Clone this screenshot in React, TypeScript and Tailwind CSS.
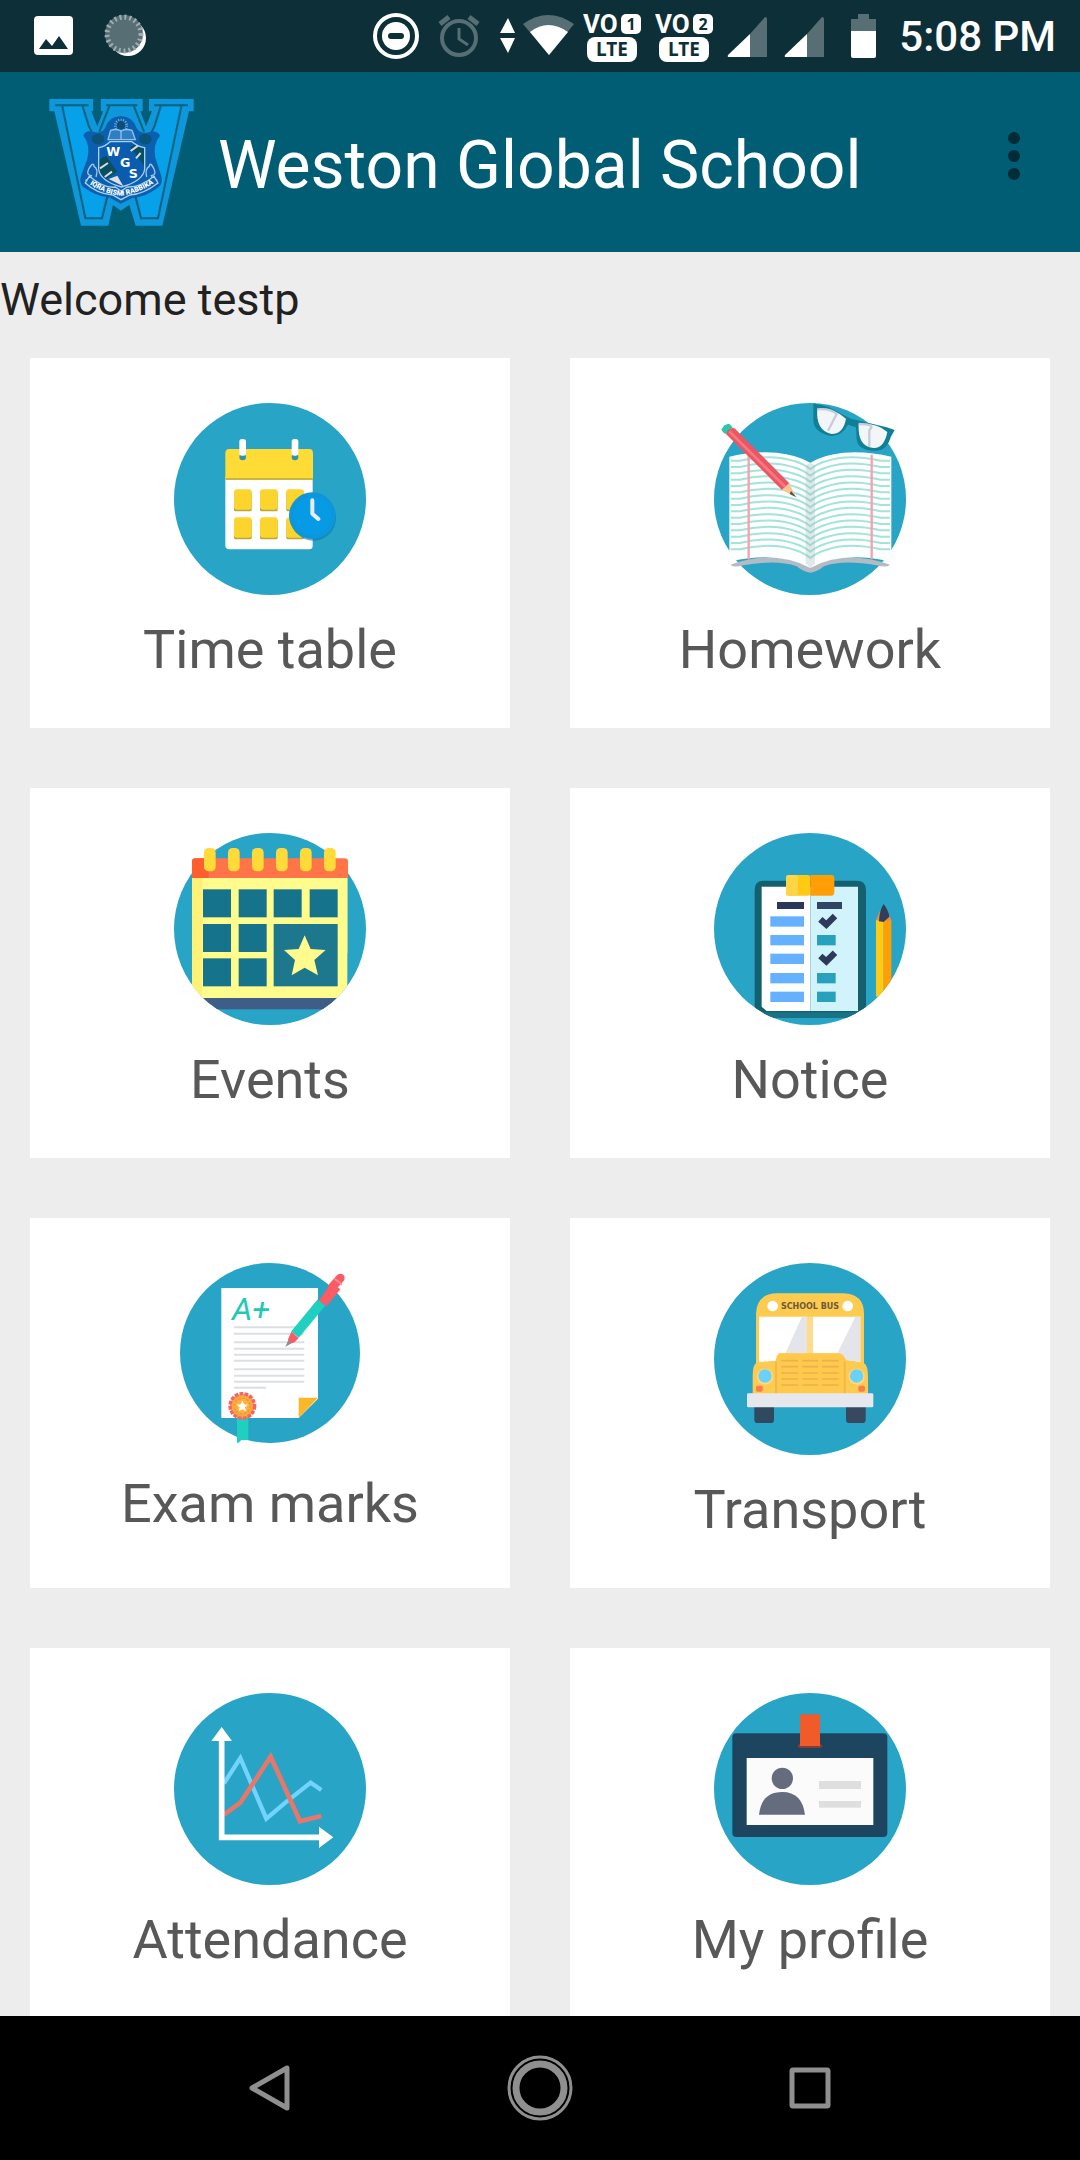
import type { ReactNode } from 'react'

const CIRCLE = '#28a4c6'

function Disc({ id, children }: { id: string; children: ReactNode }) {
  return (
    <svg viewBox="42 39 576 576" className="size-48" aria-hidden="true">
      <clipPath id={id}>
        <circle cx="330" cy="327" r="288" />
      </clipPath>
      <circle cx="330" cy="327" r="288" fill={CIRCLE} />
      {children}
    </svg>
  )
}

function TimeTableIcon() {
  return (
    <Disc id="timetable">
      <path d="M196 260H458V468Q458 478 446 478H208Q196 478 196 466Z" fill="#fff" />
      <path d="M196 268V190Q196 177 208 177H448Q459 177 459 190V268Z" fill="#fedb35" />
      <path d="M196 264H459V270H196Z" fill="#c9b63c" />
      {[248, 405].map((x) => (
        <g key={x}>
          <circle cx={x} cy="201" r="10" fill="#2d96ad" />
          <rect x={x - 10} y="147" width="20" height="50" rx="8" fill="#fff" />
        </g>
      ))}
      {[298, 382].map((y) =>
        [222, 300, 379].map((x) => (
          <g key={`${x}-${y}`}>
            <rect x={x} y={y + 6} width="53" height="60" rx="5" fill="#b5a83e" />
            <rect x={x} y={y} width="53" height="61" rx="9" fill="#fbd52d" />
          </g>
        ))
      )}
      <circle cx="460" cy="384" r="68" fill="#0b78ae" opacity="0.6" />
      <circle cx="457" cy="377" r="70" fill="#0a97dc" />
      <circle cx="457" cy="377" r="57" fill="#079be5" />
      <path d="M457 331V371L475 387" fill="none" stroke="#e6eef2" strokeWidth="12" strokeLinecap="round" strokeLinejoin="round" />
    </Disc>
  )
}

function HomeworkIcon() {
  const lines = Array.from({ length: 15 }, (_, i) => 212 + i * 19)
  return (
    <Disc id="homework">
      <path d="M92 524Q220 478 331 530Q440 478 570 524Q560 534 530 526Q430 508 372 529Q350 547 331 548Q312 547 290 529Q230 508 130 526Q100 534 92 524Z" fill="#b3bcc4" />
      <path d="M88 200Q160 182 230 188Q290 194 331 218Q370 194 430 188Q500 182 574 200V490L560 512Q420 484 331 534Q240 484 100 512L88 490Z" fill="#fdfefe" />
      {lines.map((y) => (
        <path
          key={y}
          d={`M92 ${y}H120Q215 ${y - 22} 285 ${y + 2}Q312 ${y + 10} 331 ${y + 26}Q350 ${y + 10} 377 ${y + 2}Q445 ${y - 22} 542 ${y}H570`}
          fill="none"
          stroke="#a4e3d9"
          strokeWidth="6"
        />
      ))}
      <path d="M331 218L345 226V520L331 534L317 520V226Z" fill="#9fb9bd" opacity="0.3" />
      <path d="M146 194V508M515 194V508" stroke="#f5a3ab" strokeWidth="7" />
      <path d="M65 118Q72 102 88 101L98 112L78 132Q66 128 65 118Z" fill="#2cc5ad" />
      <path d="M78 132Q82 116 102 113L268 280L246 300Z" fill="#ec5564" />
      <path d="M88 124L256 291" stroke="#f47a80" strokeWidth="8" />
      <path d="M268 280L246 300L288 322Z" fill="#f4c796" />
      <path d="M273 303L289 322L269 312Z" fill="#574f55" />
      <path d="M340 40L384 50L452 86L478 92L560 112L584 120L572 142Q560 182 530 182Q474 184 470 148L468 112L444 104Q424 140 392 138Q340 126 340 90Z" fill="#107f95" />
      <path d="M352 56Q400 52 438 86Q430 132 394 132Q346 120 352 56Z" fill="#f3f6f9" />
      <path d="M476 102Q530 98 562 126Q552 176 520 174Q472 170 476 102Z" fill="#f3f6f9" />
      <path d="M352 58Q390 54 410 72L384 122M476 102Q530 102 508 120V170" fill="none" stroke="#c7ccd8" strokeWidth="7" />
    </Disc>
  )
}

function EventsIcon() {
  const cells = [
    [129, 208], [236, 208], [341, 208], [449, 208],
    [129, 312], [236, 312],
    [129, 415], [236, 415],
  ]
  return (
    <Disc id="events">
      <g clipPath="url(#events)">
        <rect x="90" y="534" width="480" height="34" fill="#3f5d89" />
        <rect x="96" y="170" width="466" height="364" fill="#fffb8d" />
        <rect x="96" y="170" width="30" height="364" fill="#fff176" />
      </g>
      <path d="M96 174H562V400H96Z" fill="#fffb8d" />
      <path d="M96 174H128V400H96Z" fill="#fff176" />
      <path d="M96 174V124Q96 115 106 115H554Q564 115 564 124V174Z" fill="#ff7548" />
      <path d="M96 174V124Q96 115 106 115H146V174Z" fill="#ff5f2e" />
      {[132, 204, 276, 348, 420, 492].map((x) => (
        <rect key={x} x={x} y="84" width="35" height="70" rx="14" fill="#fedb39" />
      ))}
      {cells.map(([x, y]) => (
        <rect key={`${x}-${y}`} x={x} y={y} width="84" height="84" fill="#15748b" />
      ))}
      <rect x="341" y="312" width="192" height="187" fill="#1d778d" />
      <path d="M434 346L452 387L497 390L463 420L474 466L434 443L395 466L405 420L372 390L416 387Z" fill="#fffb8d" />
    </Disc>
  )
}

function NoticeIcon() {
  return (
    <Disc id="notice">
      <g clipPath="url(#notice)">
        <path d="M164 210Q164 182 190 182H470Q498 182 498 210V592H164Z" fill="#14606f" />
        <rect x="160" y="577" width="340" height="17" fill="#187387" />
        <path d="M185 200H331V573H200L185 560Z" fill="#fff" />
        <path d="M331 200H474V573H331Z" fill="#d0f3fc" />
        <path d="M528 300H551V530H528Z" fill="#ffca14" />
        <path d="M551 300H574V530H551Z" fill="#ff9f05" />
        <path d="M528 300L540 272H562L574 300L562 304L551 296L540 304Z" fill="#e98b4a" />
        <path d="M537 304Q538 270 551 252Q566 272 568 290L551 306Z" fill="#323c5c" />
      </g>
      <rect x="258" y="165" width="73" height="62" rx="8" fill="#ffca14" />
      <rect x="258" y="165" width="36" height="62" rx="8" fill="#ffd546" />
      <path d="M331 165H394Q403 165 403 174V216Q403 227 394 227H331Z" fill="#ff9f05" />
      <rect x="231" y="246" width="81" height="21" fill="#2d3757" />
      <rect x="351" y="246" width="75" height="21" fill="#2f4563" />
      {[289, 345, 401, 459, 515].map((y) => (
        <rect key={y} x="211" y={y} width="101" height="31" fill="#66b1ff" />
      ))}
      {[345, 459, 515].map((y) => (
        <rect key={y} x="351" y={y} width="56" height="31" fill="#28a1bf" />
      ))}
      {[0, 110].map((dy) => (
        <path key={dy} d={`M361 ${298 + dy}L379 ${314 + dy}L405 ${288 + dy}`} fill="none" stroke="#2d3a5b" strokeWidth="19" />
      ))}
    </Disc>
  )
}

function ExamIcon() {
  return (
    <svg viewBox="60 39 540 540" className="mb-1.5 size-45" aria-hidden="true">
      <circle cx="330" cy="309" r="270" fill={CIRCLE} />
      <path d="M184 114H474V446L416 504H184Z" fill="#fff" />
      <path d="M416 504V443H474Z" fill="#fdb628" />
      <text x="216" y="211" fontFamily="Roboto, sans-serif" fontStyle="italic" fontSize="96" fill="#1fc9b4">A+</text>
      {[232, 251, 277, 296, 314, 332, 358, 377, 395].map((y) => (
        <path key={y} d={`M222 ${y}H433`} stroke="#dcdfe1" strokeWidth="6" />
      ))}
      <path d="M222 413H318" stroke="#dcdfe1" strokeWidth="6" />
      <path d="M231 500H265V570H244L236 578H231Z" fill="#1fd0c0" />
      <circle cx="247" cy="468" r="37" fill="#f9a83a" />
      <circle cx="247" cy="468" r="37" fill="none" stroke="#f6616a" strokeWidth="10" strokeDasharray="11 4" />
      <circle cx="247" cy="468" r="23" fill="#fdb43c" stroke="#f98a4e" strokeWidth="4" strokeDasharray="7 5" />
      <path d="M247 452L252 463L264 464L255 472L258 484L247 478L236 484L239 472L230 464L242 463Z" fill="#fff" />
      <path d="M476 152L514 98L541 118L500 168Z" fill="#fa5c66" />
      <path d="M516 112L541 84" stroke="#fa5c66" strokeWidth="26" strokeLinecap="round" />
      <path d="M524 86L546 104" stroke="#ff8990" strokeWidth="6" />
      <path d="M405 254L484 158" stroke="#1fd0c0" strokeWidth="30" />
      <path d="M394 245L416 264L404 277L388 282L384 268Z" fill="#fa5c66" />
      <path d="M385 270L394 280L376 291Z" fill="#8b8f94" />
    </svg>
  )
}

function BusIcon() {
  return (
    <Disc id="bus">
      <rect x="163" y="455" width="59" height="64" rx="10" fill="#2f495f" />
      <rect x="438" y="455" width="59" height="64" rx="10" fill="#374860" />
      <path d="M168 340V192Q170 130 232 130H430Q492 132 492 192V340Q504 346 504 380V432H158V380Q158 346 168 340Z" fill="#fdcb50" />
      <path d="M177 200H320V310H236L228 332L177 336Z" fill="#fff" />
      <path d="M339 200H481V336L440 330L424 310H339Z" fill="#fff" />
      <path d="M306 200H320V310H256ZM466 200H481V336L440 330L424 310H412Z" fill="#e3e5ea" />
      <path d="M320 200H339V310H320Z" fill="#fddb91" />
      <path d="M228 432V330Q228 310 246 310H414Q434 310 434 330V432Z" fill="#ffc94d" />
      <path d="M228 432V334M434 432V334" stroke="#f0b649" strokeWidth="5" />
      {[332, 350, 369, 387, 405].map((y) => (
        <path key={y} d={`M244 ${y}H294M307 ${y}H355M366 ${y}H416`} stroke="#eab248" strokeWidth="5" />
      ))}
      {[218, 443].map((x) => (
        <circle key={x} cx={x} cy="168" r="16" fill="#fff" />
      ))}
      <text x="330" y="176" textAnchor="middle" fontFamily="'DejaVu Sans', sans-serif" fontWeight="bold" fontSize="24" fill="#6b5a3a">SCHOOL BUS</text>
      {[195, 470].map((x) => (
        <g key={x}>
          <circle cx={x} cy="380" r="24" fill="#fdd98a" />
          <circle cx={x} cy="378" r="20" fill="#68d2fb" />
        </g>
      ))}
      <rect x="168" y="407" width="20" height="18" rx="5" fill="#fc7d49" />
      <rect x="475" y="407" width="20" height="18" rx="5" fill="#fc7d49" />
      <rect x="141" y="430" width="379" height="42" rx="4" fill="#e6e8ee" />
    </Disc>
  )
}

function AttendanceIcon() {
  return (
    <Disc id="attendance">
      <path d="M192 310L241 234L319 416L376 368L452 308L484 330" fill="none" stroke="#72d4fd" strokeWidth="13" />
      <path d="M192 404L241 368L332 230L420 424L484 408" fill="none" stroke="#e6776a" strokeWidth="14" />
      <path d="M185 180V472H480" fill="none" stroke="#fff" strokeWidth="17" />
      <path d="M185 141L216 183H154ZM520 472L477 504V440Z" fill="#fff" />
    </Disc>
  )
}

function ProfileIcon() {
  return (
    <Disc id="profile">
      <rect x="97" y="160" width="465" height="311" rx="12" fill="#1d4560" />
      <rect x="140" y="234" width="380" height="201" fill="#fbfbfb" />
      <path d="M300 103H360V199H300Z" fill="#f15a29" />
      <path d="M292 200L300 190V199H360V190L368 200L360 204H300Z" fill="#8a3c33" />
      <circle cx="247" cy="295" r="32" fill="#646c7d" />
      <path d="M177 404Q184 336 247 336Q306 336 315 404Z" fill="#646c7d" />
      <rect x="357" y="303" width="126" height="24" fill="#dedede" />
      <rect x="357" y="363" width="126" height="20" fill="#dedede" />
    </Disc>
  )
}

function SchoolLogo() {
  return (
    <svg viewBox="54 57 441 387" className="h-[129px] w-[147px] shrink-0" role="img" aria-label="Weston Global School crest">
      <path d="M58 60H190V97H184L202 142L219 97H212V60H338V97H331L348 142L366 97H357V60H491V97H477L397 440H317L298 378L272 395L249 378L235 440H153L73 97H58Z" fill="#0f97dc" />
      <path d="M101 84H154L200 230L226 330L212 414H170ZM450 84H396L350 230L322 330L337 414H380Z" fill="#06a1e8" />
      <path d="M76 79H176M97 82L166 418H216L240 320M158 82L176 140L200 190M228 79H322M238 82L208 158M312 82L342 158M372 79H474M392 82L374 140L350 190M454 82L384 418H333L308 320" fill="none" stroke="#046380" strokeWidth="6" />
      <path d="M191 60H211V97L202 126L191 104ZM339 60H356V97L348 126L339 104Z" fill="#045f7a" />
      <path d="M272 111Q310 113 320 148Q332 166 356 160Q380 152 390 170Q368 196 376 236L394 292Q400 312 386 324Q350 354 308 356L272 374L240 356Q196 352 160 324Q146 312 154 288L172 240Q182 196 160 170Q166 152 188 158Q216 166 226 146Q236 113 272 111Z" fill="#0c5fae" />
      <ellipse cx="204" cy="180" rx="19" ry="16" fill="#0a5379" />
      <ellipse cx="346" cy="180" rx="19" ry="16" fill="#0a5379" />
      <circle cx="273" cy="140" r="17" fill="none" stroke="#7fb3e2" strokeWidth="8" strokeDasharray="3 4" />
      <circle cx="273" cy="138" r="12" fill="#0b4f72" />
      <path d="M242 154Q260 148 273 156Q288 148 306 154L316 182H234Z" fill="#2d7fc4" stroke="#8fc0ea" strokeWidth="4" />
      <path d="M273 156V180" stroke="#b4d6f3" strokeWidth="3" />
      <path d="M206 206Q226 202 240 188H306Q322 202 344 206V270Q340 306 274 324Q210 306 206 270Z" fill="#0a5cae" />
      <path d="M206 242L228 230L262 278L228 300Q207 286 206 270ZM300 204L318 196L344 212V262Z" fill="#0a4f5f" />
      <path d="M206 206Q226 202 240 188H306Q322 202 344 206V270Q340 306 274 324Q210 306 206 270Z" fill="none" stroke="#a9d0f2" strokeWidth="4" />
      <path d="M210 268L234 252M224 294L246 278M302 216L324 200M318 238L332 222" stroke="#d4dbe2" strokeWidth="6" />
      <path d="M236 300L262 290L280 322Z" fill="#dfe0df" />
      <g fontFamily="'DejaVu Sans', sans-serif" fontWeight="bold" fontSize="38" fill="#fff">
        <text x="229" y="230">W</text>
        <text x="270" y="263">G</text>
        <text x="296" y="296">S</text>
      </g>
      <path d="M166 304Q180 300 184 290Q168 288 176 270Q190 246 192 262Q206 270 198 294M382 304Q366 300 364 290Q380 288 372 270Q360 246 358 262Q344 270 350 294" fill="none" stroke="#9cc8ee" strokeWidth="4" />
      <path d="M178 292Q224 330 256 324L273 336L292 324Q330 326 372 292L384 312Q340 346 300 348L273 362L248 348Q200 344 166 312Z" fill="#0c63b4" stroke="#a9d0f2" strokeWidth="4" />
      <path id="motto" d="M174 312Q224 346 273 350Q326 344 382 306" fill="none" />
      <text fontFamily="Roboto, sans-serif" fontWeight="900" fontSize="21" fill="#fff">
        <textPath href="#motto" startOffset="6">IQRA BISMI RABBIKA</textPath>
      </text>
    </svg>
  )
}

function VolteIcon({ sim }: { sim: number }) {
  return (
    <svg viewBox="0 0 58 72" className="h-18 w-[58px]" aria-label={`VoLTE SIM ${sim}`}>
      <text x="0" y="33" fontFamily="Roboto, sans-serif" fontWeight="700" fontSize="26" fill="#fff">VO</text>
      <rect x="38" y="14" width="20" height="20" rx="5" fill="#fff" />
      <text x="48" y="30" textAnchor="middle" fontFamily="'Noto Sans', sans-serif" fontWeight="bold" fontSize="16" fill="#0d2f38">{sim}</text>
      <rect x="4" y="37" width="50" height="25" rx="8" fill="#fff" />
      <text x="29" y="56" textAnchor="middle" fontFamily="'Noto Sans', sans-serif" fontWeight="bold" fontSize="19" fill="#0d2f38">LTE</text>
    </svg>
  )
}

function SignalIcon() {
  return (
    <svg viewBox="0 0 40 72" className="h-18 w-10" aria-hidden="true">
      <path d="M38 17Q40 17 40 19V57H23V34Z" fill="#566e74" />
      <path d="M23 34V57H2Q0 57 1 55Z" fill="#fff" />
    </svg>
  )
}

function StatusBar() {
  return (
    <div className="flex h-18 shrink-0 items-center bg-[#0d2f38] pr-6 pl-[34px] text-white">
      <svg viewBox="0 0 40 40" className="size-10" aria-hidden="true">
        <rect x="0" y="0" width="39" height="39" rx="4" fill="#fff" />
        <path d="M5 33L12 23L18 30L25 20L34 33Z" fill="#0d2f38" />
      </svg>
      <svg viewBox="0 0 44 44" className="ml-[30px] size-11" aria-hidden="true">
        <circle cx="24" cy="24" r="18" fill="#fff" />
        <circle cx="20" cy="20" r="19" fill="#566e74" />
        <circle cx="20" cy="20" r="17" fill="none" stroke="#a0adb1" strokeWidth="5" strokeDasharray="2 3" />
      </svg>

      <div className="ml-auto flex items-center">
        <svg viewBox="0 0 46 46" className="size-[46px]" aria-hidden="true">
          <circle cx="23" cy="23" r="21" fill="none" stroke="#fff" strokeWidth="4" />
          <circle cx="23" cy="23" r="14" fill="#fff" />
          <rect x="15" y="20" width="16" height="6" rx="3" fill="#0d2f38" />
        </svg>
        <svg viewBox="0 0 42 44" className="ml-[19px] h-11 w-[42px]" fill="none" stroke="#566e74" strokeWidth="4" aria-hidden="true">
          <circle cx="21" cy="24" r="17" />
          <path d="M21 14V25L30 31" strokeWidth="3" />
          <path d="M2 10L11 3M40 10L31 3" strokeWidth="5" />
        </svg>
        <svg viewBox="0 0 74 72" className="ml-5 h-18 w-[74px]" aria-hidden="true">
          <path d="M8 18L15 33H0ZM8 53L15 38H0Z" fill="#fff" />
          <path d="M23 24Q48 6 74 24L49 55Z" fill="#566e74" />
          <path d="M30 32Q48 18 68 32L49 55Z" fill="#fff" />
        </svg>
        <div className="ml-[9px] flex gap-3.5">
          <VolteIcon sim={1} />
          <VolteIcon sim={2} />
        </div>
        <div className="ml-3.5 flex gap-[17px]">
          <SignalIcon />
          <SignalIcon />
        </div>
        <svg viewBox="0 0 25 72" className="ml-[27px] h-18 w-[25px]" aria-hidden="true">
          <path d="M7 14H18V19H25V31H0V19H7Z" fill="#566e74" />
          <path d="M0 31H25V56Q25 58 23 58H2Q0 58 0 56Z" fill="#fff" />
        </svg>
        <span className="ml-[23px] pt-0.5 text-[42px] leading-[70px] font-medium">5:08 PM</span>
      </div>
    </div>
  )
}

function NavBar() {
  return (
    <nav className="flex h-36 shrink-0 items-center justify-center gap-[204px] bg-black">
      <button type="button" aria-label="Back">
        <svg viewBox="0 0 66 66" className="size-[66px]">
          <path d="M50 13V53L15 33Z" fill="none" stroke="#8f8f8f" strokeWidth="5" strokeLinejoin="round" />
        </svg>
      </button>
      <button type="button" aria-label="Home">
        <svg viewBox="0 0 66 66" className="size-[66px]" fill="none" stroke="#8f8f8f">
          <circle cx="33" cy="33" r="31" strokeWidth="3" />
          <circle cx="33" cy="33" r="24" strokeWidth="7" />
        </svg>
      </button>
      <button type="button" aria-label="Recent apps">
        <svg viewBox="0 0 66 66" className="size-[66px]">
          <rect x="15" y="15" width="36" height="36" rx="1" fill="none" stroke="#8f8f8f" strokeWidth="5" />
        </svg>
      </button>
    </nav>
  )
}

const TILES = [
  { label: 'Time table', href: '#timetable', Icon: TimeTableIcon },
  { label: 'Homework', href: '#homework', Icon: HomeworkIcon },
  { label: 'Events', href: '#events', Icon: EventsIcon },
  { label: 'Notice', href: '#notice', Icon: NoticeIcon },
  { label: 'Exam marks', href: '#exam-marks', Icon: ExamIcon },
  { label: 'Transport', href: '#transport', Icon: BusIcon },
  { label: 'Attendance', href: '#attendance', Icon: AttendanceIcon },
  { label: 'My profile', href: '#my-profile', Icon: ProfileIcon },
]

export default function App() {
  return (
    <div className="flex h-screen flex-col bg-[#ededed] font-['Roboto',sans-serif]">
      <StatusBar />

      <header className="flex h-45 shrink-0 items-center bg-[#005d74] pr-11 pl-12">
        <SchoolLogo />
        <h1 className="ml-[23px] flex-1 pt-2 text-[66px] leading-[78px] text-white">Weston Global School</h1>
        <button type="button" aria-label="More options" className="mb-3">
          <svg viewBox="0 0 44 60" className="h-[60px] w-11" fill="#012b36">
            <circle cx="22" cy="12" r="6" />
            <circle cx="22" cy="30" r="6" />
            <circle cx="22" cy="48" r="6" />
          </svg>
        </button>
      </header>

      {/* scrolls under the navigation bar */}
      <main className="min-h-0 flex-1 overflow-y-auto [scrollbar-width:none]">
        <p className="pt-5 text-[45px] leading-[56px] text-[#212121]">Welcome testp</p>
        <div className="grid grid-cols-2 gap-15 px-[30px] pt-[30px] pb-[30px]">
          {TILES.map(({ label, href, Icon }) => (
            <a key={label} href={href} className="flex h-[370px] flex-col items-center bg-white pt-[45px]">
              <Icon />
              <span className="mt-[25px] text-[54px] leading-[60px] text-[#585858]">{label}</span>
            </a>
          ))}
        </div>
      </main>

      <NavBar />
    </div>
  )
}
